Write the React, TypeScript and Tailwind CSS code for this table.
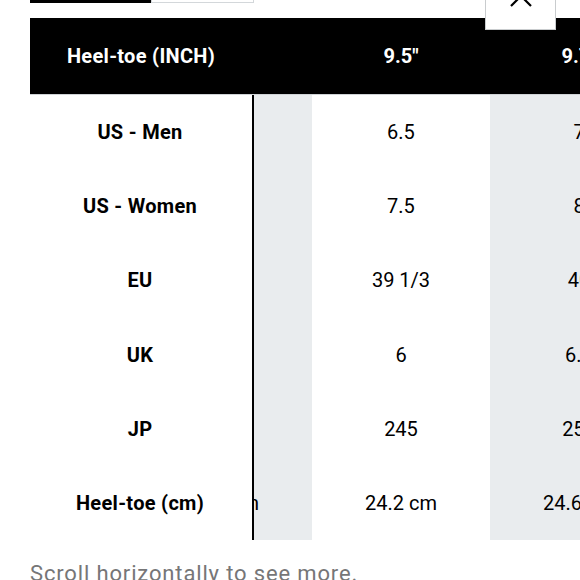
const labels = ['US - Men', 'US - Women', 'EU', 'UK', 'JP', 'Heel-toe (cm)'];

const columns = [
  { head: '9.4"', values: ['6', '7', '38 2/3', '5.5', '240', '23.8 cm'] },
  { head: '9.5"', values: ['6.5', '7.5', '39 1/3', '6', '245', '24.2 cm'] },
  { head: '9.7"', values: ['7', '8', '40', '6.5', '250', '24.6 cm'] },
];

export default function App() {
  return (
    <div className="relative w-[580px] h-[580px] overflow-hidden bg-white" style={{ fontFamily: 'Roboto, "Liberation Sans", sans-serif' }}>
      {/* tab switcher, scrolled mostly out of view */}
      <div className="flex pl-[30px] h-[3px]">
        <div className="w-[121px] bg-black" />
        <div className="w-[103px] border border-t-0 border-[#d3d7da] bg-white" />
      </div>

      {/* close button */}
      <button className="absolute left-[485px] top-[-20px] w-[71px] h-[50px] bg-white border border-[#c9ccce] flex items-center justify-center">
        <svg width="26" height="26" viewBox="0 0 26 26" className="mt-[-18px]">
          <path d="M3 3 L23 23 M23 3 L3 23" stroke="#000" strokeWidth="2.2" fill="none" />
        </svg>
      </button>

      <div className="mt-[15px] ml-[30px] flex">
        {/* sticky label column */}
        <div className="w-[224px] shrink-0 flex flex-col">
          <div className="h-[77px] bg-black border-b border-[#cfd3d6] flex items-center justify-center pr-[2px]">
            <span className="text-white font-bold text-[20px] tracking-[0.3px]">Heel-toe (INCH)</span>
          </div>
          <div className="border-r-2 border-black bg-white">
            {labels.map((l) => (
              <div key={l} className="h-[74.17px] flex items-center justify-center pr-[2px]">
                <span className="text-black font-bold text-[20px] tracking-[0.3px]">{l}</span>
              </div>
            ))}
          </div>
        </div>

        {/* scrolled columns */}
        <div className="flex-1 overflow-hidden">
          <div className="flex ml-[-120px]">
            {columns.map((c, i) => (
              <div key={c.head} className="w-[178px] shrink-0 flex flex-col">
                <div className="h-[77px] bg-black border-b border-[#cfd3d6] flex items-center justify-center">
                  <span className="text-white font-bold text-[20px]">{c.head}</span>
                </div>
                <div className={i % 2 === 0 ? 'bg-[#e9ecee]' : 'bg-white'}>
                  {c.values.map((v, j) => (
                    <div key={j} className="h-[74.17px] flex items-center justify-center">
                      <span className="text-black text-[20px]">{v}</span>
                    </div>
                  ))}
                </div>
              </div>
            ))}
          </div>
        </div>
      </div>

      <p className="ml-[30px] mt-[17px] text-[22px] text-[#767677] tracking-[0.85px]">Scroll horizontally to see more.</p>
    </div>
  );
}
